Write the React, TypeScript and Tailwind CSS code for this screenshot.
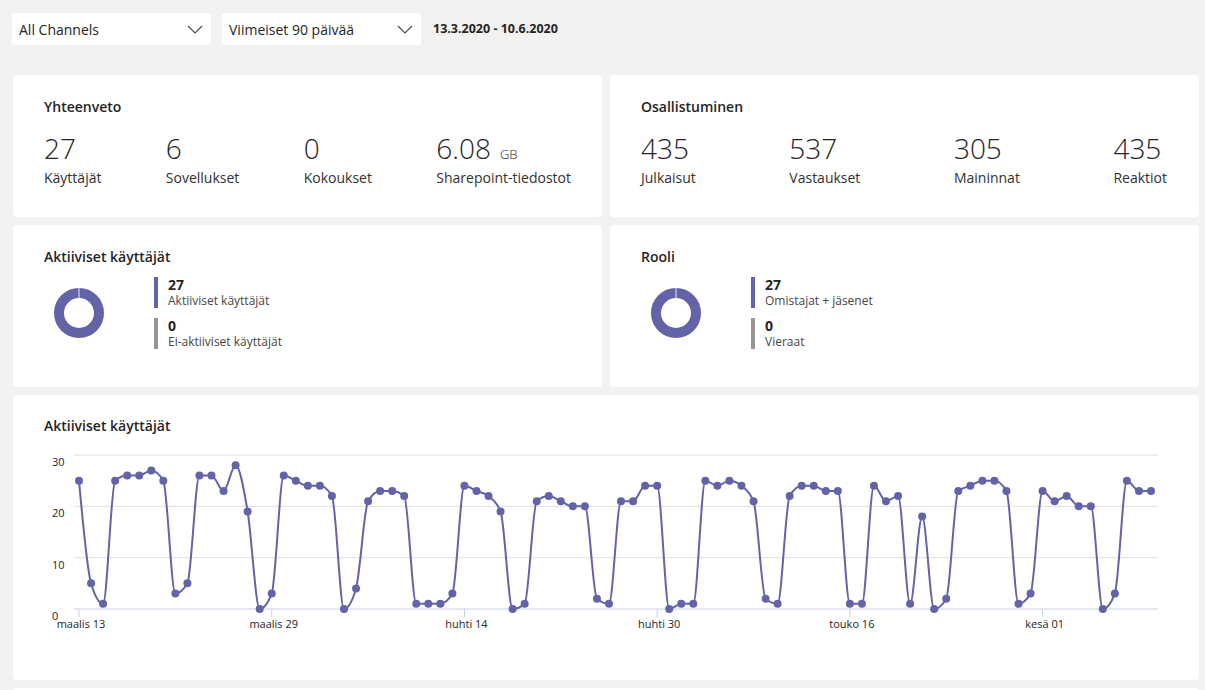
import React from 'react';

const PURPLE = '#6264a7';

// daily active users, 13.3. - 10.6.
const activeUsers: number[] = [
  25, 5, 1, 25, 26, 26, 27, 25, 3, 5, 26, 26, 23, 28, 19, 0, 3, 26,
  25, 24, 24, 22, 0, 4, 21, 23, 23, 22, 1, 1, 1, 3, 24, 23, 22, 19,
  0, 1, 21, 22, 21, 20, 20, 2, 1, 21, 21, 24, 24, 0, 1, 1, 25, 24,
  25, 24, 21, 2, 1, 22, 24, 24, 23, 23, 1, 1, 24, 21, 22, 1, 18, 0,
  2, 23, 24, 25, 25, 23, 1, 3, 23, 21, 22, 20, 20, 0, 3, 25, 23, 23,
];

const X0 = 79;
const STEP = 12.045;
const Y0 = 609;
const YSCALE = 154 / 30;

const px = (i: number) => X0 + i * STEP;
const py = (v: number) => Y0 - v * YSCALE;

// monotone cubic (same idea as d3 curveMonotoneX)
function monotonePath(values: number[]): string {
  const n = values.length;
  const xs = values.map((_, i) => px(i));
  const ys = values.map(py);
  const sign = (v: number) => (v < 0 ? -1 : 1);
  const t: number[] = new Array(n).fill(0);
  for (let i = 1; i < n - 1; i++) {
    const h0 = xs[i] - xs[i - 1];
    const h1 = xs[i + 1] - xs[i];
    const s0 = (ys[i] - ys[i - 1]) / h0;
    const s1 = (ys[i + 1] - ys[i]) / h1;
    const p = (s0 * h1 + s1 * h0) / (h0 + h1);
    t[i] = (sign(s0) + sign(s1)) * Math.min(Math.abs(s0), Math.abs(s1), 0.5 * Math.abs(p)) || 0;
  }
  const sFirst = (ys[1] - ys[0]) / (xs[1] - xs[0]);
  t[0] = (3 * sFirst - t[1]) / 2;
  const sLast = (ys[n - 1] - ys[n - 2]) / (xs[n - 1] - xs[n - 2]);
  t[n - 1] = (3 * sLast - t[n - 2]) / 2;

  let d = `M${xs[0]},${ys[0]}`;
  for (let i = 0; i < n - 1; i++) {
    const dx = (xs[i + 1] - xs[i]) / 3;
    d += ` C${xs[i] + dx},${ys[i] + dx * t[i]} ${xs[i + 1] - dx},${ys[i + 1] - dx * t[i + 1]} ${xs[i + 1]},${ys[i + 1]}`;
  }
  return d;
}

const ticks = [
  { i: 0, label: 'maalis 13' },
  { i: 16, label: 'maalis 29' },
  { i: 32, label: 'huhti 14' },
  { i: 48, label: 'huhti 30' },
  { i: 64, label: 'touko 16' },
  { i: 80, label: 'kesä 01' },
];

function Chevron() {
  return (
    <svg width="16" height="9" viewBox="0 0 16 9" fill="none">
      <polyline points="1,1 8,8 15,1" stroke="#484644" strokeWidth="1.1" />
    </svg>
  );
}

function Dropdown({ label }: { label: string }) {
  return (
    <div className="flex h-[32px] w-[199px] items-center justify-between rounded-[3px] bg-white pl-[7px] pr-[8px] text-[14px] text-[#252423]">
      <span>{label}</span>
      <Chevron />
    </div>
  );
}

function Stat({ value, unit, label }: { value: string; unit?: string; label: string }) {
  return (
    <div className="flex flex-col">
      <div className="h-[36px] text-[28px] leading-[36px] font-light text-[#252423]">
        {value}
        {unit && <span className="ml-[9px] text-[13px] leading-none">{unit}</span>}
      </div>
      <div className="mt-[2px] text-[14px] leading-[20px] text-[#323130]">{label}</div>
    </div>
  );
}

function Donut() {
  return (
    <svg width="50" height="50" viewBox="0 0 50 50">
      <circle cx="25" cy="25" r="20" fill="none" stroke={PURPLE} strokeWidth="10" />
      <line x1="25" y1="0" x2="25" y2="10" stroke="#e8e8f2" strokeWidth="1" />
    </svg>
  );
}

function LegendItem({ value, label, color }: { value: string; label: string; color: string }) {
  return (
    <div className="flex h-[31px] gap-[10px]">
      <div className="w-[4px]" style={{ backgroundColor: color }} />
      <div className="flex flex-col">
        <span className="text-[14px] leading-[16px] font-bold text-[#252423]">{value}</span>
        <span className="text-[12px] leading-[15px] text-[#484644]">{label}</span>
      </div>
    </div>
  );
}

function PieCard({ title, items }: { title: string; items: { value: string; label: string; color: string }[] }) {
  return (
    <div className="rounded bg-white px-[31px] pt-[23px] pb-[38px]">
      <div className="text-[14px] leading-[18px] font-semibold text-[#252423]">{title}</div>
      <div className="mt-[11px] flex items-center">
        <div className="ml-[10px]">
          <Donut />
        </div>
        <div className="ml-[50px] flex flex-col gap-[10px]">
          {items.map((it) => (
            <LegendItem key={it.label} {...it} />
          ))}
        </div>
      </div>
    </div>
  );
}

function LineChart() {
  const path = monotonePath(activeUsers);
  return (
    <svg width="1124" height="200" viewBox="44 440 1124 200" className="mt-[5px] block">
      {[30, 20, 10].map((v) => (
        <line key={v} x1="74" x2="1158" y1={py(v)} y2={py(v)} stroke="#e1dfdd" strokeWidth="1" />
      ))}
      <line x1="74" x2="1158" y1={Y0} y2={Y0} stroke="#c8d1e0" strokeWidth="1" />
      {[30, 20, 10, 0].map((v) => (
        <text key={v} x="52" y={py(v) + 11} fontSize="11" fill="#252423" fontFamily="'Open Sans', sans-serif">
          {v}
        </text>
      ))}
      {ticks.map((t) => (
        <g key={t.label}>
          <line x1={px(t.i)} x2={px(t.i)} y1={Y0} y2={Y0 + 8} stroke="#c8d1e0" strokeWidth="1" />
          <text x={px(t.i) + 2} y="628" fontSize="11" fill="#252423" textAnchor="middle" fontFamily="'Open Sans', sans-serif">
            {t.label}
          </text>
        </g>
      ))}
      <path d={path} fill="none" stroke={PURPLE} strokeWidth="2" />
      {activeUsers.map((v, i) => (
        <circle key={i} cx={px(i)} cy={py(v)} r="4" fill={PURPLE} />
      ))}
    </svg>
  );
}

export default function App() {
  return (
    <div className="min-h-screen bg-[#f3f2f1] pt-[13px] pl-[13px] pr-[6px] font-['Open_Sans',sans-serif] text-[#252423]">
      <div className="-ml-px flex items-center gap-[11px]">
        <Dropdown label="All Channels" />
        <Dropdown label="Viimeiset 90 päivää" />
        <span className="ml-px text-[12.5px] font-bold text-[#252423]">13.3.2020 - 10.6.2020</span>
      </div>

      <div className="mt-[30px] grid grid-cols-2 gap-2">
        <div className="rounded bg-white px-[31px] pt-[23px] pb-[29px]">
          <div className="text-[14px] leading-[18px] font-semibold">Yhteenveto</div>
          <div className="mt-[14px] flex justify-between">
            <Stat value="27" label="Käyttäjät" />
            <Stat value="6" label="Sovellukset" />
            <Stat value="0" label="Kokoukset" />
            <Stat value="6.08" unit="GB" label="Sharepoint-tiedostot" />
          </div>
        </div>

        <div className="rounded bg-white pl-[31px] pr-[32px] pt-[23px] pb-[29px]">
          <div className="text-[14px] leading-[18px] font-semibold">Osallistuminen</div>
          <div className="mt-[14px] flex justify-between">
            <Stat value="435" label="Julkaisut" />
            <Stat value="537" label="Vastaukset" />
            <Stat value="305" label="Maininnat" />
            <Stat value="435" label="Reaktiot" />
          </div>
        </div>

        <PieCard
          title="Aktiiviset käyttäjät"
          items={[
            { value: '27', label: 'Aktiiviset käyttäjät', color: PURPLE },
            { value: '0', label: 'Ei-aktiiviset käyttäjät', color: '#979593' },
          ]}
        />
        <PieCard
          title="Rooli"
          items={[
            { value: '27', label: 'Omistajat + jäsenet', color: PURPLE },
            { value: '0', label: 'Vieraat', color: '#979593' },
          ]}
        />

        <div className="col-span-2 rounded bg-white px-[31px] pt-[22px] pb-[40px]">
          <div className="text-[14px] leading-[18px] font-semibold">Aktiiviset käyttäjät</div>
          <LineChart />
        </div>

        <div className="col-span-2 h-[60px] rounded bg-white" />
      </div>
    </div>
  );
}
